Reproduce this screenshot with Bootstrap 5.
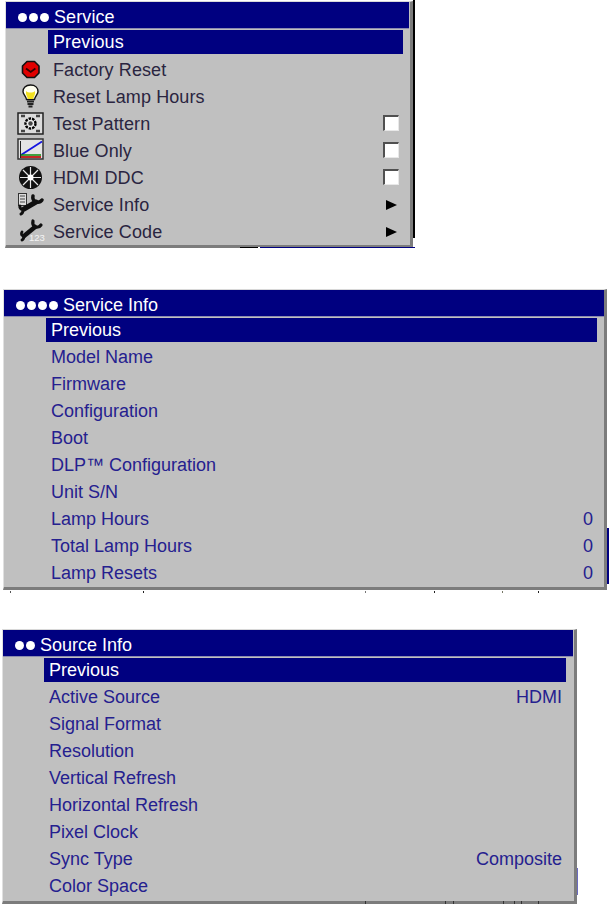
<!DOCTYPE html>
<html lang="en">
<head>
    <meta charset="UTF-8">
    <meta name="viewport" content="width=device-width, initial-scale=1.0">
    <title>Projector Menus</title>
    <link href="https://cdn.jsdelivr.net/npm/bootstrap@5.3.0/dist/css/bootstrap.min.css" rel="stylesheet">
    <script src="https://cdn.jsdelivr.net/npm/bootstrap@5.3.0/dist/js/bootstrap.bundle.min.js"></script>
    <style>
        body {
            background-color: #fff;
            font-family: "Liberation Sans", Arial, sans-serif;
            font-size: 18px;
            line-height: 27px;
        }
        .osd-panel {
            position: relative;
            background-color: #c0c0c0;
            border-top: 1px solid #d8d8d8;
            border-left: 1px solid #e0e0e0;
            border-right: 3px solid #7c7c7c;
            border-bottom: 3px solid #7c7c7c;
        }
        .osd-panel::before, .osd-panel::after { content: ""; position: absolute; }
        .osd-one { width: 408px; margin: 1px 0 41px 5px; height: 247px; letter-spacing: .1px; }
        .osd-two { width: 604px; margin: 0 0 39px 3px; height: 301px; }
        .osd-three { width: 575px; margin: 0 0 0 2px; height: 275px; }

        /* bits of the page that show around the menus */
        .osd-one::after { top: -2px; right: -5px; width: 2px; height: 238px; background: #000; }
        .osd-one::before {
            top: 245px; left: 234px; right: -5px; height: 1px;
            background: linear-gradient(to right, #000 0 18px, #fff 18px 20px, #000080 20px);
        }
        .osd-two::after { top: 238px; right: -5px; width: 2px; height: 56px; background: #000080; }
        .osd-two::before {
            top: 301px; left: 0; right: 0; height: 2px;
            background:
                linear-gradient(#555, #555) 6px 0 / 1px 100% no-repeat,
                linear-gradient(#222, #222) 139px 0 / 1px 100% no-repeat,
                linear-gradient(#777, #777) 361px 0 / 1px 100% no-repeat,
                linear-gradient(#222, #222) 430px 0 / 1px 100% no-repeat,
                linear-gradient(#776, #776) 498px 0 / 1px 100% no-repeat,
                linear-gradient(#222, #222) 534px 0 / 1px 100% no-repeat;
        }
        .osd-three::after { top: 238px; right: -4px; width: 1px; height: 27px; background: #6a6ac0; }
        .osd-three::before {
            top: 271px; left: 0; right: 0; height: 3px;
            background:
                linear-gradient(#333, #333) 362px 0 / 1px 100% no-repeat,
                linear-gradient(#333, #333) 442px 0 / 1px 100% no-repeat,
                linear-gradient(#333, #333) 450px 0 / 1px 100% no-repeat,
                linear-gradient(#333, #333) 500px 0 / 1px 100% no-repeat,
                linear-gradient(#333, #333) 511px 0 / 1px 100% no-repeat,
                linear-gradient(#333, #333) 518px 0 / 1px 100% no-repeat,
                linear-gradient(#333, #333) 535px 0 / 1px 100% no-repeat;
        }

        .osd-header {
            height: 27px;
            background-color: #000080;
            color: #fff;
            border-bottom: 1px solid #8a8ab0;
        }
        .osd-one .osd-header, .osd-three .osd-header { margin-right: 1px; }
        .osd-dots { display: inline-flex; gap: 2px; margin-right: 5px; }
        .osd-dots i { width: 9px; height: 9px; background: #fff; border-radius: 50%; display: block; }
        .osd-prev {
            height: 24px;
            line-height: 24px;
            background-color: #000080;
            color: #fff;
            padding-left: 5px;
            margin-top: 1px;
            margin-bottom: 2px;
        }
        .osd-one .osd-prev { margin-left: 42px; margin-right: 7px; }
        .osd-two .osd-prev { margin-left: 42px; margin-right: 7px; }
        .osd-three .osd-prev { margin-left: 41px; margin-right: 8px; }
        .osd-row { height: 27px; color: #2a2540; }
        .osd-one .osd-row { padding-left: 47px; padding-right: 12px; padding-top: 2px; }
        .osd-two .osd-row { padding-left: 47px; padding-right: 11px; color: #25208f; }
        .osd-three .osd-row { padding-left: 46px; padding-right: 12px; color: #25208f; }
        .osd-icon { position: absolute; left: 9px; top: 0; width: 32px; height: 27px; }
        .osd-check {
            width: 16px; height: 16px;
            background: #fff;
            border-top: 2px solid #505050;
            border-left: 2px solid #505050;
            border-right: 1px solid #e8e8e8;
            border-bottom: 1px solid #e8e8e8;
            margin-top: -4px;
            margin-right: -1px;
        }
        .osd-arrow {
            width: 0; height: 0;
            border-left: 11px solid #000;
            border-top: 5.5px solid transparent;
            border-bottom: 5.5px solid transparent;
            margin-top: -2px;
            margin-right: 1px;
        }
    </style>
</head>
<body>
    <div class="osd-panel osd-one">
        <div class="osd-header d-flex align-items-center ps-2 pt-1">
            <span class="osd-dots ms-1"><i></i><i></i><i></i></span>Service
        </div>
        <div class="osd-prev">Previous</div>
        <div class="osd-row position-relative d-flex align-items-center justify-content-between">
            <svg class="osd-icon" viewBox="0 0 32 27"><polygon points="12,5.500 19.500,5.500 24,10 24,17 19.500,21.500 12,21.500 7.500,17 7.500,10" fill="#e00000" stroke="#111" stroke-width="1.6" stroke-linejoin="round"/><path d="M11 12.500l4.700 3.500 4.700-3.500" fill="none" stroke="#300" stroke-width="1.800"/></svg>
            <span>Factory Reset</span>
        </div>
        <div class="osd-row position-relative d-flex align-items-center justify-content-between">
            <svg class="osd-icon" viewBox="0 0 32 27"><path d="M15.500 2c-5 0-7.500 3-7.500 6.500 0 3 3 4.500 3.500 8h8c.5-3.500 3.500-5 3.500-8 0-3.500-2.500-6.500-7.500-6.500z" fill="#fffff0" stroke="#111" stroke-width="1.400"/><path d="M11 8c2 2 7 2 9 0v3l-2 5h-5l-2-5z" fill="#f2e020"/><path d="M12 18.500h7M12.500 21h6M13.500 23.500h4" stroke="#222" stroke-width="1.800"/></svg>
            <span>Reset Lamp Hours</span>
        </div>
        <div class="osd-row position-relative d-flex align-items-center justify-content-between">
            <svg class="osd-icon" viewBox="0 0 32 27"><rect x="3" y="3" width="25" height="21" fill="#dcdcdc" stroke="#222" stroke-width="1.500"/><path d="M6 6h4M21 6h4M6 21h4M21 21h4" stroke="#444" stroke-width="2.500"/><circle cx="15.500" cy="13.500" r="5" fill="#eee" stroke="#000" stroke-width="2.400" stroke-dasharray="2.500 1"/><circle cx="15.500" cy="13.500" r="2.200" fill="#444"/></svg>
            <span>Test Pattern</span>
            <span class="osd-check"></span>
        </div>
        <div class="osd-row position-relative d-flex align-items-center justify-content-between">
            <svg class="osd-icon" viewBox="0 0 32 27"><rect x="3" y="2" width="25" height="20" fill="#e4e4e4" stroke="#333" stroke-width="1.500"/><path d="M6 18L27 4.500" stroke="#1414e0" stroke-width="1.800"/><path d="M6 18h20" stroke="#0a8a0a" stroke-width="1.500"/><path d="M6 20h20" stroke="#c01010" stroke-width="1.800"/><path d="M5.500 4v17" stroke="#222"/></svg>
            <span>Blue Only</span>
            <span class="osd-check"></span>
        </div>
        <div class="osd-row position-relative d-flex align-items-center justify-content-between">
            <svg class="osd-icon" viewBox="0 0 32 27"><circle cx="15.500" cy="13.500" r="11.500" fill="#111"/><path d="M15.500 13.500L15.500 3M15.500 13.500L23 6M15.500 13.500L26 13.500M15.500 13.500L23 21M15.500 13.500L15.500 24M15.500 13.500L8 21M15.500 13.500L5 13.500M15.500 13.500L8 6" stroke="#e8e8e8" stroke-width="1.200"/><circle cx="15.500" cy="13.500" r="3" fill="#fff"/></svg>
            <span>HDMI DDC</span>
            <span class="osd-check"></span>
        </div>
        <div class="osd-row position-relative d-flex align-items-center justify-content-between">
            <svg class="osd-icon" viewBox="0 0 32 27"><rect x="3.500" y="2.500" width="8" height="12" fill="#ddd" stroke="#333"/><path d="M5 5h5M5 8h5M5 11h5" stroke="#444"/><g fill="none" stroke="#101010" stroke-linecap="round"><path d="M9 18L21 11" stroke-width="5"/><path d="M21 11Q17 9 18 5M21 11Q25 12 27 9" stroke-width="3.500"/><path d="M8 19Q4 17 5 15M8 19Q8 22 6 23" stroke-width="3"/></g></svg>
            <span>Service Info</span>
            <span class="osd-arrow"></span>
        </div>
        <div class="osd-row position-relative d-flex align-items-center justify-content-between">
            <svg class="osd-icon" viewBox="0 0 32 27"><g fill="none" stroke="#101010" stroke-linecap="round"><path d="M9 18L20 9" stroke-width="4.500"/><path d="M20 9Q17 7 18 3M20 9Q24 10 26 7" stroke-width="3.200"/><path d="M9 18Q5 17 7 14M9 18Q9 21 7 22" stroke-width="2.800"/></g><text x="14" y="23" font-family="Liberation Sans" font-size="9.500" letter-spacing="0" fill="#f4f4f4">123</text></svg>
            <span>Service Code</span>
            <span class="osd-arrow"></span>
        </div>
    </div>

    <div class="osd-panel osd-two">
        <div class="osd-header d-flex align-items-center ps-2 pt-1">
            <span class="osd-dots ms-1"><i></i><i></i><i></i><i></i></span>Service Info
        </div>
        <div class="osd-prev">Previous</div>
        <div class="osd-row d-flex justify-content-between"><span>Model Name</span></div>
        <div class="osd-row d-flex justify-content-between"><span>Firmware</span></div>
        <div class="osd-row d-flex justify-content-between"><span>Configuration</span></div>
        <div class="osd-row d-flex justify-content-between"><span>Boot</span></div>
        <div class="osd-row d-flex justify-content-between"><span>DLP™ Configuration</span></div>
        <div class="osd-row d-flex justify-content-between"><span>Unit S/N</span></div>
        <div class="osd-row d-flex justify-content-between"><span>Lamp Hours</span><span>0</span></div>
        <div class="osd-row d-flex justify-content-between"><span>Total Lamp Hours</span><span>0</span></div>
        <div class="osd-row d-flex justify-content-between"><span>Lamp Resets</span><span>0</span></div>
    </div>

    <div class="osd-panel osd-three">
        <div class="osd-header d-flex align-items-center ps-2 pt-1">
            <span class="osd-dots ms-1"><i></i><i></i></span>Source Info
        </div>
        <div class="osd-prev">Previous</div>
        <div class="osd-row d-flex justify-content-between"><span>Active Source</span><span>HDMI</span></div>
        <div class="osd-row d-flex justify-content-between"><span>Signal Format</span></div>
        <div class="osd-row d-flex justify-content-between"><span>Resolution</span></div>
        <div class="osd-row d-flex justify-content-between"><span>Vertical Refresh</span></div>
        <div class="osd-row d-flex justify-content-between"><span>Horizontal Refresh</span></div>
        <div class="osd-row d-flex justify-content-between"><span>Pixel Clock</span></div>
        <div class="osd-row d-flex justify-content-between"><span>Sync Type</span><span>Composite</span></div>
        <div class="osd-row d-flex justify-content-between"><span>Color Space</span></div>
    </div>
</body>
</html>
